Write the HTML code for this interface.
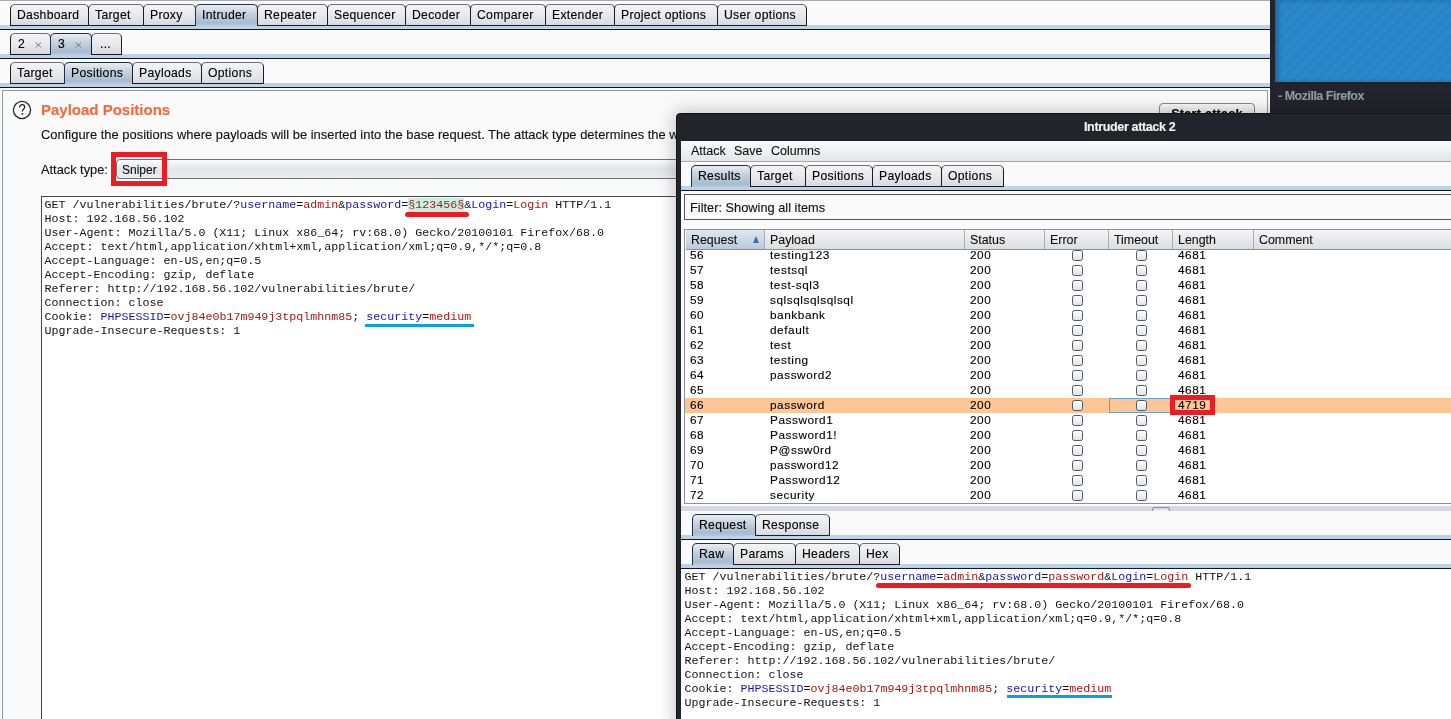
<!DOCTYPE html><html><head><meta charset="utf-8"><style>
*{margin:0;padding:0;box-sizing:border-box}
html,body{width:1451px;height:719px;overflow:hidden;background:#fafafa;font-family:"Liberation Sans",sans-serif;color:#000}
#root div,#root span{-webkit-text-stroke:0.12px currentColor}
#root .mono,#root .mono span{-webkit-text-stroke:0}
.ab{position:absolute}
.tab{position:absolute;border:1px solid #1c1c24;border-top-color:#6c6e76;border-radius:5px 5px 0 0;background:linear-gradient(#f4f4f6,#e6e7ea 60%,#d9dadf);font-size:12.2px;letter-spacing:.3px;padding-left:6px;text-align:left;white-space:nowrap;color:#000}
.tab.sel{border-color:#1e3048;border-bottom:none;background:linear-gradient(#eaedf2,#c5d2de 40%,#a8bbcf 85%,#b6c9dd)}
.band{position:absolute;background:#bcd2e8;border-bottom:1px solid #0f1624}
.mono{font-family:"Liberation Mono",monospace;font-size:11.667px;line-height:14px;white-space:pre;color:#111}
.k{color:#1515c0}.v{color:#aa1515}
.cb{position:absolute;width:11px;height:11px;border:1px solid #55585f;border-radius:2.5px;background:linear-gradient(#fefefe,#dfe2e8)}
.row{position:absolute;height:15px;font-size:11.8px;letter-spacing:.55px;white-space:nowrap;color:#000}
</style></head><body><div id="root" style="position:absolute;left:0;top:0;width:1451px;height:719px;overflow:hidden;background:#fafafa;will-change:transform"><div class="ab" style="left:0;top:0;width:1270px;height:1px;background:#a9abb1"></div><div class="band" style="left:0;top:25px;width:1270px;height:5px"></div><div class="tab" style="left:10px;top:4px;width:79px;height:22px;line-height:20px">Dashboard</div><div class="tab" style="left:88px;top:4px;width:56px;height:22px;line-height:20px">Target</div><div class="tab" style="left:143px;top:4px;width:53px;height:22px;line-height:20px">Proxy</div><div class="tab sel" style="left:195px;top:4px;width:63px;height:22px;line-height:20px">Intruder</div><div class="tab" style="left:257px;top:4px;width:71px;height:22px;line-height:20px">Repeater</div><div class="tab" style="left:327px;top:4px;width:79px;height:22px;line-height:20px">Sequencer</div><div class="tab" style="left:405px;top:4px;width:66px;height:22px;line-height:20px">Decoder</div><div class="tab" style="left:470px;top:4px;width:76px;height:22px;line-height:20px">Comparer</div><div class="tab" style="left:545px;top:4px;width:70px;height:22px;line-height:20px">Extender</div><div class="tab" style="left:614px;top:4px;width:104px;height:22px;line-height:20px">Project options</div><div class="tab" style="left:717px;top:4px;width:90px;height:22px;line-height:20px">User options</div><div class="band" style="left:0;top:54px;width:1270px;height:5px"></div><div class="tab" style="left:10px;top:33px;width:41px;height:22px;line-height:20px"><span style="margin-left:1px">2</span><svg style="position:absolute;left:23.5px;top:7.6px" width="7" height="6" viewBox="0 0 7 6"><path d="M0.6 0.5L6.2 5.5M6.2 0.5L0.6 5.5" stroke="#7a7a7a" stroke-width="1"/></svg></div><div class="tab sel" style="left:50px;top:33px;width:42px;height:22px;line-height:20px"><span style="margin-left:1px">3</span><svg style="position:absolute;left:23.5px;top:7.6px" width="7" height="6" viewBox="0 0 7 6"><path d="M0.6 0.5L6.2 5.5M6.2 0.5L0.6 5.5" stroke="#7a7a7a" stroke-width="1"/></svg></div><div class="tab" style="left:91px;top:33px;width:31px;height:22px;line-height:20px"><span style="margin-left:2px">...</span></div><div class="band" style="left:0;top:83px;width:1270px;height:5px"></div><div class="tab" style="left:10px;top:62px;width:55px;height:22px;line-height:20px">Target</div><div class="tab sel" style="left:64px;top:62px;width:69px;height:22px;line-height:20px">Positions</div><div class="tab" style="left:132px;top:62px;width:70px;height:22px;line-height:20px">Payloads</div><div class="tab" style="left:201px;top:62px;width:63px;height:22px;line-height:20px">Options</div><div class="ab" style="left:2px;top:90px;width:1266px;height:640px;border:1px solid #8f97a3;background:#fafafa"></div><svg class="ab" style="left:12px;top:99px" width="22" height="22" viewBox="0 0 22 22"><circle cx="10" cy="11" r="8.6" fill="none" stroke="#262626" stroke-width="1.3"/><path d="M7.6 8.6 C7.6 6.6 8.9 5.7 10.2 5.7 C11.6 5.7 12.7 6.7 12.7 8.1 C12.7 9.9 10.4 10.3 10.4 12.6" fill="none" stroke="#262626" stroke-width="1.25"/><rect x="9.6" y="14.2" width="1.6" height="1.6" fill="#262626"/></svg><div class="ab" style="left:41px;top:101px;font-size:15px;font-weight:bold;color:#f26a3c;white-space:nowrap">Payload Positions</div><div class="ab" style="left:41px;top:127px;font-size:12.95px;white-space:nowrap;color:#111">Configure the positions where payloads will be inserted into the base request. The attack type determines the way in which payloads are assigned to payload positions - see help for full details.</div><div class="ab" style="left:41px;top:162px;font-size:12.8px;white-space:nowrap;color:#111">Attack type:</div><div class="ab" style="left:116px;top:159px;width:600px;height:20px;border:1px solid #6b6f76;border-radius:4px;background:linear-gradient(#fbfbfc,#e1e3e8 55%,#eceef1)"></div><div class="ab" style="left:122px;top:163px;font-size:12px;white-space:nowrap;color:#111">Sniper</div><div class="ab" style="left:1159px;top:103px;width:96px;height:22px;border:1px solid #85888e;border-radius:4px;background:linear-gradient(#fbfbfc,#d9dbe0);font-size:12.6px;letter-spacing:.25px;font-weight:bold;text-align:center;line-height:21px">Start attack</div><div class="ab" style="left:41px;top:196px;width:1226px;height:540px;border:1px solid #484848;background:#fff"></div><div class="ab mono" style="left:44.5px;top:198px">GET /vulnerabilities/brute/?<span class="k">username</span>=<span class="v">admin</span>&amp;<span class="k">password</span>=<span style="background:#c9efe3;color:#b31414">§123456§</span>&amp;<span class="k">Login</span>=<span class="v">Login</span> HTTP/1.1
Host: 192.168.56.102
User-Agent: Mozilla/5.0 (X11; Linux x86_64; rv:68.0) Gecko/20100101 Firefox/68.0
Accept: text/html,application/xhtml+xml,application/xml;q=0.9,*/*;q=0.8
Accept-Language: en-US,en;q=0.5
Accept-Encoding: gzip, deflate
Referer: http://192.168.56.102/vulnerabilities/brute/
Connection: close
Cookie: <span class="k">PHPSESSID</span>=<span class="v">ovj84e0b17m949j3tpqlmhnm85</span>; <span class="k">security</span>=<span class="v">medium</span>
Upgrade-Insecure-Requests: 1</div><div class="ab" style="left:405px;top:212px;width:64px;height:4.6px;background:#ec1c24;border-radius:2.5px"></div><div class="ab" style="left:365px;top:324px;width:109px;height:3px;background:#0ba0e4"></div><div class="ab" style="left:111px;top:152px;width:56px;height:34px;border:5px solid #ec1c24"></div><div class="ab" style="left:1270px;top:0;width:181px;height:719px;background:#22242b"></div><div class="ab" style="left:1275px;top:0;width:176px;height:82px;background:repeating-linear-gradient(135deg,#2a88cb 0 4px,#2784c6 4px 8px);box-shadow:inset 3px 0 4px rgba(0,0,0,.25)"></div><div class="ab" style="left:1278px;top:89px;font-size:12.5px;font-weight:bold;letter-spacing:-.5px;color:#8d9aa8;white-space:nowrap">- Mozilla Firefox</div><div class="ab" style="left:670px;top:107px;width:800px;height:650px;border-radius:8px;box-shadow:none"></div><div class="ab" style="left:676px;top:113px;width:785px;height:616px;background:#22242b;border:1px solid #121419;border-radius:4px 4px 0 0;box-shadow:0 0 18px 2px rgba(0,0,0,.22)"></div><div class="ab" style="left:1084px;top:120px;font-size:12.5px;font-weight:bold;letter-spacing:-.35px;color:#f4f4f4;white-space:nowrap">Intruder attack 2</div><div class="ab" style="left:681px;top:141px;width:780px;height:590px;background:#fafafa"></div><div class="ab" style="left:681px;top:141px;width:780px;height:21px;background:linear-gradient(#fdfdfd,#e2e4e8);border-bottom:1px solid #a3a6ad"></div><div class="ab" style="left:691px;top:144px;font-size:12.5px;white-space:nowrap;color:#111">Attack</div><div class="ab" style="left:734px;top:144px;font-size:12.5px;white-space:nowrap;color:#111">Save</div><div class="ab" style="left:771px;top:144px;font-size:12.5px;white-space:nowrap;color:#111">Columns</div><div class="band" style="left:681px;top:186px;width:780px;height:5px"></div><div class="tab sel" style="left:691px;top:165px;width:60px;height:22px;line-height:20px">Results</div><div class="tab" style="left:750px;top:165px;width:56px;height:22px;line-height:20px">Target</div><div class="tab" style="left:805px;top:165px;width:68px;height:22px;line-height:20px">Positions</div><div class="tab" style="left:872px;top:165px;width:70px;height:22px;line-height:20px">Payloads</div><div class="tab" style="left:941px;top:165px;width:63px;height:22px;line-height:20px">Options</div><div class="ab" style="left:684px;top:194px;width:780px;height:26px;border:1px solid #55575c;background:#fafafa"></div><div class="ab" style="left:690px;top:200px;font-size:12.8px;white-space:nowrap;color:#111">Filter: Showing all items</div><div class="ab" style="left:684px;top:229px;width:780px;height:275px;border:1px solid #8e9096;background:#fff"></div><div class="ab" style="left:686px;top:230px;width:79px;height:20px;background:linear-gradient(#dfe7ef,#b9cadc);border-right:1px solid #a9acb3;border-bottom:1px solid #8e9096;font-size:12.4px;line-height:20px;padding-left:5px;white-space:nowrap;color:#111">Request</div><div class="ab" style="left:765px;top:230px;width:200px;height:20px;background:linear-gradient(#f5f5f7,#dcdde2);border-right:1px solid #a9acb3;border-bottom:1px solid #8e9096;font-size:12.4px;line-height:20px;padding-left:5px;white-space:nowrap;color:#111">Payload</div><div class="ab" style="left:965px;top:230px;width:80px;height:20px;background:linear-gradient(#f5f5f7,#dcdde2);border-right:1px solid #a9acb3;border-bottom:1px solid #8e9096;font-size:12.4px;line-height:20px;padding-left:5px;white-space:nowrap;color:#111">Status</div><div class="ab" style="left:1045px;top:230px;width:64px;height:20px;background:linear-gradient(#f5f5f7,#dcdde2);border-right:1px solid #a9acb3;border-bottom:1px solid #8e9096;font-size:12.4px;line-height:20px;padding-left:5px;white-space:nowrap;color:#111">Error</div><div class="ab" style="left:1109px;top:230px;width:64px;height:20px;background:linear-gradient(#f5f5f7,#dcdde2);border-right:1px solid #a9acb3;border-bottom:1px solid #8e9096;font-size:12.4px;line-height:20px;padding-left:5px;white-space:nowrap;color:#111">Timeout</div><div class="ab" style="left:1173px;top:230px;width:81px;height:20px;background:linear-gradient(#f5f5f7,#dcdde2);border-right:1px solid #a9acb3;border-bottom:1px solid #8e9096;font-size:12.4px;line-height:20px;padding-left:5px;white-space:nowrap;color:#111">Length</div><div class="ab" style="left:1254px;top:230px;width:207px;height:20px;background:linear-gradient(#f5f5f7,#dcdde2);border-right:1px solid #a9acb3;border-bottom:1px solid #8e9096;font-size:12.4px;line-height:20px;padding-left:5px;white-space:nowrap;color:#111">Comment</div><div class="ab" style="left:753px;top:236px;width:0;height:0;border-left:3.6px solid transparent;border-right:3.6px solid transparent;border-bottom:7px solid #3d6fae"></div><div class="ab" style="left:685px;top:249px;width:780px;height:254px;overflow:hidden"><div class="row" style="left:0;top:-1px;width:780px;"><span class="ab" style="left:5px;top:0px">56</span><span class="ab" style="left:85px;top:0px">testing123</span><span class="ab" style="left:285px;top:0px">200</span><span class="cb" style="left:387px;top:2px"></span><span class="cb" style="left:451px;top:2px"></span><span class="ab" style="left:493px;top:0px">4681</span></div><div class="row" style="left:0;top:14px;width:780px;"><span class="ab" style="left:5px;top:0px">57</span><span class="ab" style="left:85px;top:0px">testsql</span><span class="ab" style="left:285px;top:0px">200</span><span class="cb" style="left:387px;top:2px"></span><span class="cb" style="left:451px;top:2px"></span><span class="ab" style="left:493px;top:0px">4681</span></div><div class="row" style="left:0;top:29px;width:780px;"><span class="ab" style="left:5px;top:0px">58</span><span class="ab" style="left:85px;top:0px">test-sql3</span><span class="ab" style="left:285px;top:0px">200</span><span class="cb" style="left:387px;top:2px"></span><span class="cb" style="left:451px;top:2px"></span><span class="ab" style="left:493px;top:0px">4681</span></div><div class="row" style="left:0;top:44px;width:780px;"><span class="ab" style="left:5px;top:0px">59</span><span class="ab" style="left:85px;top:0px">sqlsqlsqlsqlsql</span><span class="ab" style="left:285px;top:0px">200</span><span class="cb" style="left:387px;top:2px"></span><span class="cb" style="left:451px;top:2px"></span><span class="ab" style="left:493px;top:0px">4681</span></div><div class="row" style="left:0;top:59px;width:780px;"><span class="ab" style="left:5px;top:0px">60</span><span class="ab" style="left:85px;top:0px">bankbank</span><span class="ab" style="left:285px;top:0px">200</span><span class="cb" style="left:387px;top:2px"></span><span class="cb" style="left:451px;top:2px"></span><span class="ab" style="left:493px;top:0px">4681</span></div><div class="row" style="left:0;top:74px;width:780px;"><span class="ab" style="left:5px;top:0px">61</span><span class="ab" style="left:85px;top:0px">default</span><span class="ab" style="left:285px;top:0px">200</span><span class="cb" style="left:387px;top:2px"></span><span class="cb" style="left:451px;top:2px"></span><span class="ab" style="left:493px;top:0px">4681</span></div><div class="row" style="left:0;top:89px;width:780px;"><span class="ab" style="left:5px;top:0px">62</span><span class="ab" style="left:85px;top:0px">test</span><span class="ab" style="left:285px;top:0px">200</span><span class="cb" style="left:387px;top:2px"></span><span class="cb" style="left:451px;top:2px"></span><span class="ab" style="left:493px;top:0px">4681</span></div><div class="row" style="left:0;top:104px;width:780px;"><span class="ab" style="left:5px;top:0px">63</span><span class="ab" style="left:85px;top:0px">testing</span><span class="ab" style="left:285px;top:0px">200</span><span class="cb" style="left:387px;top:2px"></span><span class="cb" style="left:451px;top:2px"></span><span class="ab" style="left:493px;top:0px">4681</span></div><div class="row" style="left:0;top:119px;width:780px;"><span class="ab" style="left:5px;top:0px">64</span><span class="ab" style="left:85px;top:0px">password2</span><span class="ab" style="left:285px;top:0px">200</span><span class="cb" style="left:387px;top:2px"></span><span class="cb" style="left:451px;top:2px"></span><span class="ab" style="left:493px;top:0px">4681</span></div><div class="row" style="left:0;top:134px;width:780px;"><span class="ab" style="left:5px;top:0px">65</span><span class="ab" style="left:85px;top:0px"></span><span class="ab" style="left:285px;top:0px">200</span><span class="cb" style="left:387px;top:2px"></span><span class="cb" style="left:451px;top:2px"></span><span class="ab" style="left:493px;top:0px">4681</span></div><div class="row" style="left:0;top:149px;width:780px;background:#fec597;"><span class="ab" style="left:5px;top:0px">66</span><span class="ab" style="left:85px;top:0px">password</span><span class="ab" style="left:285px;top:0px">200</span><span class="cb" style="left:387px;top:2px"></span><span class="cb" style="left:451px;top:2px"></span><span class="ab" style="left:493px;top:0px">4719</span></div><div class="row" style="left:0;top:164px;width:780px;"><span class="ab" style="left:5px;top:0px">67</span><span class="ab" style="left:85px;top:0px">Password1</span><span class="ab" style="left:285px;top:0px">200</span><span class="cb" style="left:387px;top:2px"></span><span class="cb" style="left:451px;top:2px"></span><span class="ab" style="left:493px;top:0px">4681</span></div><div class="row" style="left:0;top:179px;width:780px;"><span class="ab" style="left:5px;top:0px">68</span><span class="ab" style="left:85px;top:0px">Password1!</span><span class="ab" style="left:285px;top:0px">200</span><span class="cb" style="left:387px;top:2px"></span><span class="cb" style="left:451px;top:2px"></span><span class="ab" style="left:493px;top:0px">4681</span></div><div class="row" style="left:0;top:194px;width:780px;"><span class="ab" style="left:5px;top:0px">69</span><span class="ab" style="left:85px;top:0px">P@ssw0rd</span><span class="ab" style="left:285px;top:0px">200</span><span class="cb" style="left:387px;top:2px"></span><span class="cb" style="left:451px;top:2px"></span><span class="ab" style="left:493px;top:0px">4681</span></div><div class="row" style="left:0;top:209px;width:780px;"><span class="ab" style="left:5px;top:0px">70</span><span class="ab" style="left:85px;top:0px">password12</span><span class="ab" style="left:285px;top:0px">200</span><span class="cb" style="left:387px;top:2px"></span><span class="cb" style="left:451px;top:2px"></span><span class="ab" style="left:493px;top:0px">4681</span></div><div class="row" style="left:0;top:224px;width:780px;"><span class="ab" style="left:5px;top:0px">71</span><span class="ab" style="left:85px;top:0px">Password12</span><span class="ab" style="left:285px;top:0px">200</span><span class="cb" style="left:387px;top:2px"></span><span class="cb" style="left:451px;top:2px"></span><span class="ab" style="left:493px;top:0px">4681</span></div><div class="row" style="left:0;top:239px;width:780px;"><span class="ab" style="left:5px;top:0px">72</span><span class="ab" style="left:85px;top:0px">security</span><span class="ab" style="left:285px;top:0px">200</span><span class="cb" style="left:387px;top:2px"></span><span class="cb" style="left:451px;top:2px"></span><span class="ab" style="left:493px;top:0px">4681</span></div><div class="ab" style="left:424px;top:149px;width:62px;height:15px;border:1px solid #6a9fd4"></div></div><div class="ab" style="left:1170px;top:395px;width:45px;height:20px;border:5px solid #ec1c24"></div><div class="ab" style="left:681px;top:506px;width:780px;height:5px;background:#d5d8de"></div><div class="ab" style="left:1152px;top:506.5px;width:18px;height:4px;border:1px solid #8a919c;border-bottom:none;border-radius:3px 3px 0 0;background:linear-gradient(#d0d4dc,#f4f5f7)"></div><div class="band" style="left:681px;top:535px;width:780px;height:5px"></div><div class="tab sel" style="left:692px;top:514px;width:64px;height:22px;line-height:20px">Request</div><div class="tab" style="left:755px;top:514px;width:75px;height:22px;line-height:20px">Response</div><div class="band" style="left:681px;top:564px;width:780px;height:5px"></div><div class="tab sel" style="left:692px;top:543px;width:42px;height:22px;line-height:20px">Raw</div><div class="tab" style="left:733px;top:543px;width:63px;height:22px;line-height:20px">Params</div><div class="tab" style="left:795px;top:543px;width:65px;height:22px;line-height:20px">Headers</div><div class="tab" style="left:859px;top:543px;width:41px;height:22px;line-height:20px">Hex</div><div class="ab" style="left:681px;top:569px;width:780px;height:160px;background:#fff"></div><div class="ab mono" style="left:684.5px;top:570px">GET /vulnerabilities/brute/?<span class="k">username</span>=<span class="v">admin</span>&amp;<span class="k">password</span>=<span class="v">password</span>&amp;<span class="k">Login</span>=<span class="v">Login</span> HTTP/1.1
Host: 192.168.56.102
User-Agent: Mozilla/5.0 (X11; Linux x86_64; rv:68.0) Gecko/20100101 Firefox/68.0
Accept: text/html,application/xhtml+xml,application/xml;q=0.9,*/*;q=0.8
Accept-Language: en-US,en;q=0.5
Accept-Encoding: gzip, deflate
Referer: http://192.168.56.102/vulnerabilities/brute/
Connection: close
Cookie: <span class="k">PHPSESSID</span>=<span class="v">ovj84e0b17m949j3tpqlmhnm85</span>; <span class="k">security</span>=<span class="v">medium</span>
Upgrade-Insecure-Requests: 1</div><div class="ab" style="left:876px;top:583px;width:315px;height:5px;background:#ec1c24;border-radius:2.5px"></div><div class="ab" style="left:1007px;top:695px;width:105px;height:3px;background:#0ba0e4"></div></div></body></html>
